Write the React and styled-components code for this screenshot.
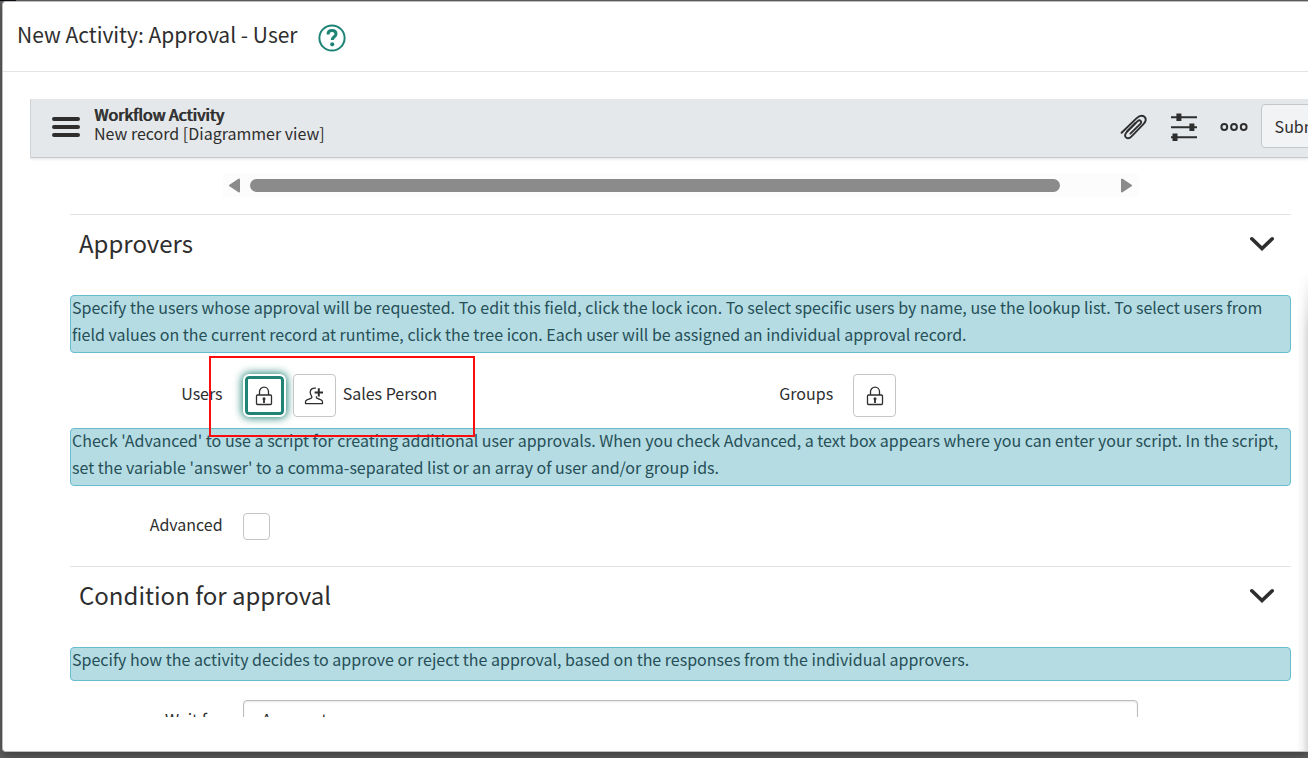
import React from "react";
import styled, { createGlobalStyle } from "styled-components";

const GlobalStyle = createGlobalStyle`
  *, *::before, *::after { box-sizing: border-box; }
  body {
    margin: 0;
    overflow: hidden;
    background: linear-gradient(90deg, #0d0a12 16px, transparent 16px) 0 0 / 100% 1px no-repeat, #606060;
    color: #2e2e2e;
    font-family: "Noto Sans CJK SC", "Noto Sans", sans-serif;
    font-size: 16px;
    line-height: 27px;
  }
  button, input, select { font: inherit; color: inherit; margin: 0; }
`;

const Backdrop = styled.div`
  min-height: 100vh;
  padding: 1px 0 6px 2px;
  display: flex;
`;

const Modal = styled.section`
  position: relative;
  flex: 1;
  min-width: 0;
  height: calc(100vh - 7px);
  display: flex;
  flex-direction: column;
  background: #fff;
  border: 1px solid #bdbdbd;
  border-right: 0;
  border-radius: 4px 0 0 4px;
  box-shadow: 0 4px 10px rgba(0, 0, 0, 0.35);
`;

const EdgeShadow = styled.div`
  position: absolute;
  top: 270px;
  right: 0;
  bottom: 0;
  width: 12px;
  pointer-events: none;
  background: linear-gradient(90deg, transparent, rgba(0, 0, 0, 0.04) 50%, rgba(0, 0, 0, 0.15));
  mask-image: linear-gradient(transparent, #000 60px);
`;

const ModalHeader = styled.header`
  flex: none;
  display: flex;
  align-items: center;
  gap: 20px;
  height: 70px;
  padding: 2px 0 0 14px;
  border-bottom: 1px solid #e3e3e3;
`;

const Title = styled.h1`
  margin: 0;
  padding-bottom: 8px;
  font-size: 21px;
  font-weight: 400;
  line-height: 28px;
`;

const BareButton = styled.button`
  display: flex;
  padding: 0;
  border: 0;
  background: none;
  cursor: pointer;
`;

const Frame = styled.main`
  flex: 1;
  min-height: 0;
  margin: 27px 0 34px 27px;
  overflow: hidden;
`;

const Toolbar = styled.div`
  display: flex;
  align-items: center;
  height: 59px;
  padding: 0 0 2px 21px;
  background: #e5e8eb;
  border-left: 1px solid #d0d3d6;
  border-bottom: 1px solid #c6c9cc;
  box-shadow: 0 1px 3px rgba(0, 0, 0, 0.12);
`;

const RecordName = styled.div`
  flex: 1;
  padding: 0 0 6px 14px;
  line-height: 19px;
`;

const RecordTitle = styled.h2`
  margin: 0;
  font-size: 16px;
  font-weight: 400;
  line-height: 19px;
  text-shadow: 1px 0 0 currentColor;
`;

const Actions = styled.div`
  display: flex;
  align-items: center;
  gap: 13px;
  margin-right: -35px;
  padding-bottom: 2px;
`;

const ActionIcons = styled.div`
  display: flex;
  align-items: center;
  gap: 22px;
  padding-top: 2px;
`;

const SubmitButton = styled.button`
  height: 44px;
  padding: 0 13px;
  background: #f2f3f5;
  border: 1px solid #c4c7ca;
  border-radius: 4px;
`;

const Form = styled.form`
  padding: 16px 17px 0 40px;
`;

const FieldRow = styled.div`
  display: grid;
  grid-template-columns: ${(p) => (p.$split ? "12.5% 37.5% 12.5% 37.5%" : "12.5% 75%")};
  align-items: center;
  padding: ${(p) => p.$pad};
`;

const Label = styled.label`
  padding-bottom: 4px;
  line-height: 23px;
  text-align: right;
`;

const Field = styled.div`
  position: relative;
  display: flex;
  align-items: center;
  gap: 7px;
  padding-left: 20px;
`;

const FieldValue = styled.span`
  padding-bottom: 4px;
  line-height: 23px;
`;

const ScrollTrack = styled.div`
  grid-column: 2;
  display: flex;
  align-items: center;
  height: 23px;
  padding: 0 6px;
  gap: 10px;
  background: #fcfcfc;
`;

const ScrollLane = styled.div`
  flex: 1;
`;

const ScrollThumb = styled.div`
  width: 94%;
  height: 13px;
  border-radius: 7px;
  background: #8b8b8b;
`;

const SectionHead = styled.div`
  display: flex;
  justify-content: space-between;
  align-items: center;
  height: 81px;
  padding: 0 16px 22px 9px;
  border-top: 1px solid #e3e3e3;
`;

const SectionTitle = styled.h2`
  margin: 0;
  padding-bottom: 2px;
  font-size: 24px;
  font-weight: 400;
  line-height: 32px;
`;

const NoteBox = styled.div`
  min-height: 34px;
  padding: 0 1px 4px;
  color: #264f57;
  background: #b5dce3;
  border: 1px solid #66bdd0;
  border-radius: 4px;
`;

const NoteText = styled.p`
  margin: -2px 0 0;
`;

const IconButton = styled.button`
  display: grid;
  place-items: center;
  width: 43px;
  height: 43px;
  padding: 0;
  background: #fff;
  border: 1px solid #c6c6c6;
  border-radius: 4px;
  ${(p) =>
    p.$active &&
    `
    border: 2px solid #fff;
    border-radius: 6px;
    box-shadow: inset 0 0 0 3px #1f8476, 0 0 8px 1px #1f8476;
    outline: none;
  `}
`;

const Highlight = styled.div`
  position: absolute;
  left: -14px;
  top: -18px;
  width: 266px;
  height: 81px;
  border: 2px solid #fb0d0d;
  pointer-events: none;
  z-index: 1;
`;

const CheckBox = styled.input`
  appearance: none;
  width: 27px;
  height: 27px;
  background: #fff;
  border: 1px solid #c4c4c4;
  border-radius: 4px;
`;

const Select = styled.select`
  appearance: none;
  flex: 1;
  height: 43px;
  padding: 0 18px 4px;
  background: #fff;
  border: 1px solid #bdbdbd;
  border-radius: 4px;
  box-shadow: inset 0 1px 2px rgba(0, 0, 0, 0.1);
`;

const HelpIcon = () => (
  <svg width="28" height="28" viewBox="0 0 28 28" fill="none" stroke="#1f8476">
    <circle cx="14" cy="14" r="12.6" strokeWidth="2" />
    <path d="M10 10.400c0-2.400 1.700-3.800 4-3.800s4 1.300 4 3.400c0 2.700-3.700 2.900-3.700 6" strokeWidth="3" />
    <circle cx="14.200" cy="20.300" r="2.100" fill="#1f8476" stroke="none" />
  </svg>
);

const MenuIcon = () => (
  <svg width="28" height="22" viewBox="0 0 28 22" stroke="#2e2e2e" strokeWidth="4" strokeLinecap="round">
    <path d="M2 3h24M2 11h24M2 19h24" />
  </svg>
);

const ClipIcon = () => (
  <svg width="28" height="28" viewBox="0 0 28 28" fill="none" stroke="#2e2e2e" strokeWidth="1.900" strokeLinecap="round" strokeLinejoin="round">
    <path d="M1.600 19.800 16.400 5.400c2.400-2.300 5.600-3.600 8-1.600 2.400 2.200 1.200 5.200-1 7.400L11.600 23.400c-1.800 1.800-4 2.500-5.600 1-1.600-1.600-.8-3.800.9-5.600L17.600 8.200c1-.9 2.200-1.100 3-.3.9.9.6 2-.3 3L10.400 20.600" />
    <path d="M7 18.400 15.400 10" />
  </svg>
);

const SlidersIcon = () => (
  <svg width="28" height="28" viewBox="0 0 28 28" fill="#2e2e2e">
    <path d="M1 3.200h26v2H1zM1 13.200h26v2H1zM1 23.200h26v2H1zM6.400 .5h5v7.400h-5zM19.400 10.500h5v7.400h-5zM2.500 20.500h5v7.400h-5z" />
  </svg>
);

const MoreIcon = () => (
  <svg width="28" height="10" viewBox="0 0 28 10" fill="none" stroke="#2e2e2e" strokeWidth="2">
    <circle cx="4.300" cy="5" r="2.900" />
    <circle cx="14" cy="5" r="2.900" />
    <circle cx="23.700" cy="5" r="2.900" />
  </svg>
);

const ArrowIcon = ({ right }) => (
  <svg width="11" height="15" viewBox="0 0 11 15" fill="#8b8b8b" stroke="#8b8b8b" strokeWidth="2" strokeLinejoin="round">
    <path d={right ? "M1 1.500v12L10 7.500z" : "M10 1.500v12L1 7.500z"} />
  </svg>
);

const ChevronIcon = () => (
  <svg width="26" height="16" viewBox="0 0 26 16" fill="none" stroke="#2e2e2e" strokeWidth="3.600" strokeLinecap="round">
    <path d="M2.800 2.800 13 12.600 23.200 2.800" />
  </svg>
);

const LockIcon = () => (
  <svg width="18" height="20" viewBox="0 0 18 20" fill="none" stroke="#2e2e2e" strokeWidth="1.300">
    <rect x="1.500" y="9" width="15" height="9.500" rx="1" />
    <path d="M4.500 9V5.600a4.500 4.500 0 0 1 9 0V9" />
    <path d="M9 12.500v4.500" strokeWidth="1.800" />
    <circle cx="9" cy="12.800" r="1.500" fill="#2e2e2e" stroke="none" />
  </svg>
);

const AddUserIcon = () => (
  <svg width="20" height="20" viewBox="0 0 20 20" fill="none" stroke="#2e2e2e" strokeWidth="1.300" strokeLinejoin="round">
    <path d="M12 2.200C8.600 1.600 6.200 3.200 6.200 6.200c0 1.800.9 3 1.500 4.200.4.900.1 1.600-.9 2L3 13.800c-1 .4-1.500 1-1.500 2.200v1.600h17V16c0-1.200-.5-1.800-1.500-2.200l-3.600-1.400c-1-.4-1.300-1.100-.8-2" />
    <path d="M14.800 2.200v8.400M10.600 6.400h8.400" strokeWidth="2" />
  </svg>
);

const Note = ({ children }) => (
  <NoteBox>
    <NoteText>{children}</NoteText>
  </NoteBox>
);

const Section = ({ title }) => (
  <SectionHead>
    <SectionTitle>{title}</SectionTitle>
    <BareButton type="button" aria-label={`Toggle ${title}`}>
      <ChevronIcon />
    </BareButton>
  </SectionHead>
);

export default function App() {
  return (
    <>
      <GlobalStyle />
      <Backdrop>
        <Modal>
          <ModalHeader>
            <Title>New Activity: Approval - User</Title>
            <BareButton aria-label="Help">
              <HelpIcon />
            </BareButton>
          </ModalHeader>
          <Frame>
            <Toolbar>
              <BareButton aria-label="Menu">
                <MenuIcon />
              </BareButton>
              <RecordName>
                <RecordTitle>Workflow Activity</RecordTitle>
                New record [Diagrammer view]
              </RecordName>
              <Actions>
                <ActionIcons>
                  <BareButton aria-label="Attachments">
                    <ClipIcon />
                  </BareButton>
                  <BareButton aria-label="Personalize form">
                    <SlidersIcon />
                  </BareButton>
                  <BareButton aria-label="More options">
                    <MoreIcon />
                  </BareButton>
                </ActionIcons>
                <SubmitButton type="button">Submit</SubmitButton>
              </Actions>
            </Toolbar>
            <Form>
              <FieldRow $pad="0 0 17px">
                <ScrollTrack>
                  <ArrowIcon />
                  <ScrollLane>
                    <ScrollThumb />
                  </ScrollLane>
                  <ArrowIcon right />
                </ScrollTrack>
              </FieldRow>
              <Section title="Approvers" />
              <Note>
                Specify the users whose approval will be requested. To edit this field, click the lock icon. To select
                specific users by name, use the lookup list. To select users from field values on the current record at
                runtime, click the tree icon. Each user will be assigned an individual approval record.
              </Note>
              <FieldRow $split $pad="21px 0 11px">
                <Label htmlFor="users">Users</Label>
                <Field>
                  <Highlight />
                  <IconButton id="users" type="button" aria-label="Lock users" $active>
                    <LockIcon />
                  </IconButton>
                  <IconButton type="button" aria-label="Add me">
                    <AddUserIcon />
                  </IconButton>
                  <FieldValue>Sales Person</FieldValue>
                </Field>
                <Label htmlFor="groups">Groups</Label>
                <Field>
                  <IconButton id="groups" type="button" aria-label="Unlock groups">
                    <LockIcon />
                  </IconButton>
                </Field>
              </FieldRow>
              <Note>
                Check 'Advanced' to use a script for creating additional user approvals. When you check Advanced, a text
                box appears where you can enter your script. In the script, set the variable 'answer' to a
                comma-separated list or an array of user and/or group ids.
              </Note>
              <FieldRow $pad="27px 0 26px">
                <Label htmlFor="advanced">Advanced</Label>
                <Field>
                  <CheckBox id="advanced" type="checkbox" />
                </Field>
              </FieldRow>
              <Section title="Condition for approval" />
              <Note>
                Specify how the activity decides to approve or reject the approval, based on the responses from the
                individual approvers.
              </Note>
              <FieldRow $pad="19px 0 0">
                <Label htmlFor="wait">Wait for</Label>
                <Field>
                  <Select id="wait">
                    <option>Anyone to approve</option>
                  </Select>
                </Field>
              </FieldRow>
            </Form>
          </Frame>
          <EdgeShadow />
        </Modal>
      </Backdrop>
    </>
  );
}
